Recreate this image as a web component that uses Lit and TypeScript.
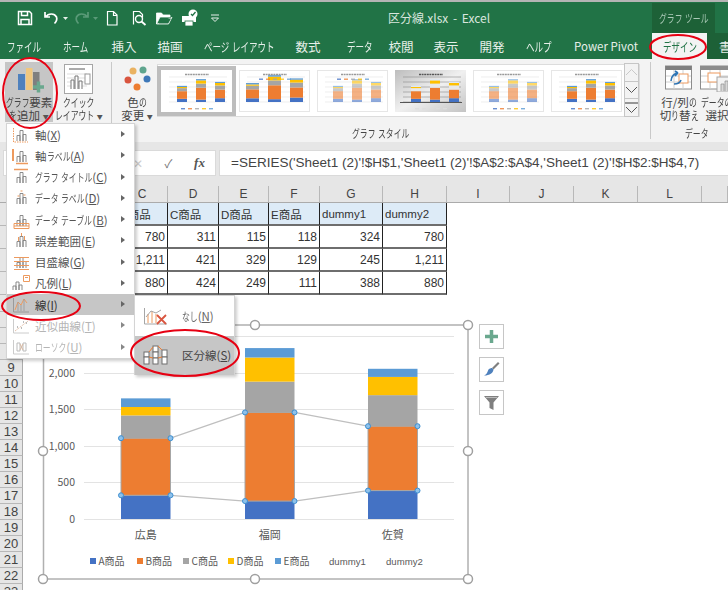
import { LitElement, html, css, svg } from "lit";
import { customElement } from "lit/decorators.js";

const COLORS = ["#4472c4", "#ed7d31", "#a5a5a5", "#ffc000", "#5b9bd5"];
// per region: A, B, C, D, E
const SERIES = [
  { name: "広島", x: 121, vals: [324, 780, 311, 115, 118] },
  { name: "福岡", x: 245, vals: [245, 1211, 421, 329, 129] },
  { name: "佐賀", x: 368, vals: [388, 880, 424, 249, 111] },
];
const TABS: [string, number][] = [
  ["ファイル", 48], ["ホーム", 56], ["挿入", 40], ["描画", 52], ["ページ レイアウト", 86], ["数式", 52],
  ["データ", 52], ["校閲", 30], ["表示", 60], ["開発", 32], ["ヘルプ", 62], ["Power Pivot", 72],
];
const COLS: [string, number][] = [
  ["", 47], ["", 47], ["C", 51], ["D", 51], ["E", 50], ["F", 51], ["G", 63], ["H", 64],
  ["I", 63], ["J", 64], ["K", 64], ["L", 64], ["", 26],
];
const TABLE = [
  ["", "", "B商品", "C商品", "D商品", "E商品", "dummy1", "dummy2"],
  ["", "", "780", "311", "115", "118", "324", "780"],
  ["", "", "1,211", "421", "329", "129", "245", "1,211"],
  ["", "", "880", "424", "249", "111", "388", "880"],
];

// the original UI font has narrow kana, so kana runs get squeezed
const SQUEEZE = 0.68;
function jp(text: string) {
  return text.split(/([ぁ-んァ-ヶー]+)/).map((part, i) =>
    i % 2
      ? html`<span class="kn" style="width:${(part.length * SQUEEZE).toFixed(2)}em"><span>${part}</span></span>`
      : part,
  );
}

const bars = (c = "#7f7f7f") => svg`<path d="M7 15V9.500h3V15M10 15V4.500h3V15M13 15V8.500h3V15" fill="none" stroke=${c} stroke-width=".9"/>`;
const OR = "#ed9a5e";
const MENU = [
  { t: "軸", k: "X", icon: svg`${bars()}<path d="M3.500 2v14H18" fill="none" stroke=${OR} stroke-dasharray="1.500 1"/>` },
  { t: "軸ラベル", k: "A", icon: svg`${bars()}<path d="M3 2v12" stroke=${OR} stroke-width="2"/><path d="M6 16.500h12" stroke=${OR} stroke-width="1.500"/>` },
  { t: "グラフ タイトル", k: "C", icon: svg`${bars()}<path d="M4 1.500h14" stroke=${OR} stroke-width="1.500"/>` },
  { t: "データ ラベル", k: "D", icon: svg`${bars()}<path d="M8.500 6.500v1M11.500 1.500v1M14.500 5.500v1" stroke=${OR} stroke-width="2"/>` },
  { t: "データ テーブル", k: "B", icon: svg`${bars()}<path d="M4 12.500h15v5H4zM4 15h15" fill="none" stroke=${OR}/>` },
  { t: "誤差範囲", k: "E", icon: svg`${bars()}<path d="M8.500 5v4M11.500 1v3M14.500 4v4" stroke=${OR}/>` },
  { t: "目盛線", k: "G", icon: svg`${bars()}<path d="M4 4.500h15M4 8.500h15M4 12.500h15M4 16.500h15" stroke=${OR}/>` },
  { t: "凡例", k: "L", icon: svg`<path d="M3 16v-4h3v4M6 16v-8h3v8M9 16v-5h3v5" fill="none" stroke="#7f7f7f" stroke-width=".9"/><path d="M13.500 1.500h6v6h-6z" fill="none" stroke=${OR}/><path d="M15 3.500h3" stroke=${OR}/>` },
  { t: "線", k: "I", sel: true, icon: svg`<path d="M3.500 2v14H19" fill="none" stroke="#9a9a9a"/><path d="M5 14l3-8 3 3 3-6 3 4" fill="none" stroke=${OR}/><path d="M8 6v9M11 9v6M14 3v12" stroke="#9a9a9a" stroke-width=".8"/>` },
  { t: "近似曲線", k: "T", off: true, icon: svg`<path d="M3.500 2v14H19" fill="none" stroke="#ccc"/><path d="M5 14L18 4" stroke="#e5c3ad" stroke-dasharray="2 1"/><path d="M7 10h1M11 11h1M13 5h1M16 6h1" stroke="#bbb" stroke-width="2"/>` },
  { t: "ローソク", k: "U", off: true, icon: svg`<path d="M3.500 2v14H19" fill="none" stroke="#ccc"/><path d="M7 5h3v8H7zM13 5h3v8h-3z" fill="none" stroke="#bbb"/><path d="M10 6l3 6M13 6l-3 6" stroke="#d8b8a0"/>` },
];

// tiny preview of the same chart for the style gallery
function thumb(v: number) {
  const dark = v === 3;
  const soft = v === 2 || v === 4;
  const x0 = v === 1 ? 7 : 13;
  const gap = v === 1 ? 22 : 19;
  const w = v === 1 ? 13 : 10;
  const k = v === 1 ? 0.0115 : 0.0098;
  const base = 32;
  const rects = SERIES.map((s, i) => {
    let y = base;
    return s.vals.map((val, c) => {
      const h = val * k;
      y -= h;
      const fill = dark && c === 2 ? "#e8e8e8" : dark && c === 4 ? "#dfe8f2" : COLORS[c];
      return svg`<rect x=${x0 + i * gap + (v === 1 ? 0 : 3)} y=${y} width=${w} height=${h} fill=${fill} opacity=${soft ? 0.6 : 1}/>`;
    });
  });
  const gridColor = dark ? "#8a8a8a" : "#e2e2e2";
  const legendY = v === 1 || v === 2 ? 8.500 : 38;
  return html`<svg class="thumb-svg" viewBox="0 0 71 42" width="71" height="42">
    ${dark ? svg`<defs><linearGradient id="tg" x2="1" y2="1"><stop offset="0" stop-color="#bdbdbd"/><stop offset=".5" stop-color="#f0f0f0"/><stop offset="1" stop-color="#c4c4c4"/></linearGradient></defs><rect width="71" height="42" fill="url(#tg)"/>` : ""}
    ${[0, 1, 2, 3, 4, 5].map((i) => svg`<path d=${`M8 ${base - i * 5}H66`} stroke=${gridColor} stroke-width=".6"/>`)}
    ${rects}
    ${dark ? svg`<path d="M5 32.500H67" stroke="#555" stroke-width="1.200"/>` : ""}
    <path d=${`M24 4.500h24`} stroke=${dark ? "#555" : "#999"} stroke-width="1.400" stroke-dasharray="2 .6"/>
    ${[0, 1, 2, 3, 4].map((i) => svg`<rect x=${20 + i * 7} y=${legendY} width="4" height="1.400" fill=${dark ? "#ddd" : COLORS[i]} opacity=".8"/>`)}
  </svg>`;
}

@customElement("app-root")
export class AppRoot extends LitElement {
  static styles = css`
    :host {
      display: block;
      position: relative;
      width: 728px;
      height: 590px;
      overflow: hidden;
      background: #fff;
      color: #444;
      font-family: "Noto Sans CJK JP", "Liberation Sans", sans-serif;
      font-feature-settings: "palt";
      font-size: 11.5px;
    }
    u { text-underline-offset: 1px; }
    .kn { display: inline-block; white-space: nowrap; font-feature-settings: normal; }
    .kn > span { display: inline-block; transform: scaleX(0.68); transform-origin: 0 50%; }

    .topline { height: 2px; background: #b4b4b4; }
    .titlebar {
      height: 31px;
      background: #217346;
      display: flex;
      align-items: center;
      color: #d9e6de;
    }
    .qat { display: flex; align-items: center; padding-left: 16px; box-sizing: border-box; width: 388px; flex: none; }
    .qat svg { display: block; flex: none; }
    .qat .m8 { margin-right: 8px; }
    .qat .m1 { margin-right: 1px; }
    .qat .m2 { margin-right: 2px; }
    .qat .m12 { margin-right: 12px; }
    .qat .m7 { margin-right: 7px; }
    .qat .m9 { margin-right: 9px; }
    .doc-title { font-size: 12px; word-spacing: 2px; flex: 1; }
    .tool-label {
      width: 63px;
      height: 30px;
      margin-right: 13px;
      margin-top: 1px;
      background: #1d6137;
      color: #a9c9b6;
      font-size: 11.5px;
      display: flex;
      align-items: center;
      justify-content: center;
      white-space: nowrap;
    }
    .tabs { display: flex; height: 26px; background: #217346; color: #e6efe9; font-size: 12.5px; }
    .tab { display: flex; align-items: center; justify-content: center; white-space: nowrap; }
    .tab.spacer { width: 10px; }
    .tab.active { width: 55px; background: #f3f3f3; color: #217346; }
    .tab.dark { flex: 1; background: #1d6137; justify-content: flex-start; padding-left: 12px; overflow: hidden; }
    .tab.latin { font-size: 11.5px; }

    .ribbon { display: flex; height: 83px; background: #f3f3f3; }
    .group { display: flex; flex-direction: column; flex: none; }
    .group.g1 { width: 111px; }
    .group.g2 { width: 539px; border-left: 1px solid #c9c9c9; box-sizing: border-box; margin: 3px 0; }
    .group.g3 { width: 78px; box-sizing: border-box; border-left: 1px solid #c9c9c9; margin: 3px 0; }
    .group-body { display: flex; height: 65px; flex: none; }
    .group-label { text-align: center; font-size: 11.5px; height: 13px; line-height: 13px; white-space: nowrap; }
    .g3 .group-label { width: 92px; }
    .rbtn { display: flex; flex-direction: column; align-items: center; line-height: 13px; white-space: nowrap; flex: none; }
    .rbtn .ico { height: 33px; display: flex; align-items: flex-end; justify-content: center; margin-bottom: 1px; }
    .rbtn.add { width: 48px; height: 60px; margin: 3px 0 0 5px; background: #c6c6c6; }
    .rbtn.quick { width: 52px; margin: 3px 0 0 0; }
    .rbtn.color { width: 38px; margin: 0 0 0 6px; }
    .caret { font-size: 6px; vertical-align: 1px; color: #555; }
    .gallery {
      display: flex;
      align-items: center;
      gap: 7px;
      height: 53px;
      margin: 2px 0 0 1px;
      width: 483px;
      flex: none;
      background: #fff;
      border: 1px solid #dcdcdc;
      box-sizing: border-box;
      position: relative;
    }
    .thumb { width: 71px; height: 42px; background: #fff; outline: 1px solid #e6e6e6; outline-offset: -1px; flex: none; }
    .thumb.first { outline: 4px solid #bdbdbd; outline-offset: 0; margin-left: 3px; }
    .thumb-svg { display: block; filter: blur(0.2px); }
    .gallery-arrows { position: absolute; right: 0; top: -1px; width: 15px; height: 53px; display: flex; flex-direction: column; }
    .gallery-arrows div { flex: 1; border: 1px solid #c6c6c6; background: #f3f3f3; display: flex; align-items: center; justify-content: center; margin-top: -1px; }
    .gallery-arrows svg { display: block; }
    .data-btns { display: flex; }
    .data-btns .rbtn { width: 56px; }
    .data-btns .second { margin-left: -18px; }
    .data-btns .ico svg { margin-bottom: 3px; }

    .gutter { height: 8px; background: #e6e6e6; }
    .formula { height: 28px; background: #e6e6e6; display: flex; }
    .fbtns {
      margin-left: 3px;
      width: 213px;
      height: 26px;
      background: #fff;
      border: 1px solid #dadada;
      box-sizing: border-box;
      display: flex;
      align-items: center;
      justify-content: flex-end;
      color: #777;
    }
    .fbtns span { width: 31px; text-align: center; }
    .fbtns .fx { font-family: "Liberation Serif", serif; font-style: italic; font-weight: bold; font-size: 13px; color: #555; }
    .fbtns .x { color: #ccc; }
    .finput {
      margin-left: 3px;
      flex: 1;
      height: 26px;
      background: #fff;
      border: 1px solid #dadada;
      border-right: 0;
      box-sizing: border-box;
      padding-left: 11px;
      font-family: "Liberation Sans", sans-serif;
      font-size: 13.5px;
      line-height: 24px;
      white-space: nowrap;
      overflow: hidden;
      color: #444;
    }

    .colhead { display: flex; height: 25px; background: #e6e6e6; border-bottom: 1px solid #ababab; box-sizing: border-box; }
    .colhead .corner { width: 23px; flex: none; }
    .colhead .c {
      flex: none;
      box-sizing: border-box;
      border-right: 1px solid #b8b8b8;
      margin-top: 8px;
      text-align: center;
      font-family: "Liberation Sans", sans-serif;
      font-size: 12px;
      line-height: 16px;
      color: #444;
    }
    .row { display: flex; box-sizing: border-box; }
    .rowno {
      width: 23px;
      flex: none;
      background: #e6e6e6;
      border-right: 1px solid #ababab;
      border-bottom: 1px solid #b8b8b8;
      box-sizing: border-box;
      text-align: center;
      font-family: "Liberation Sans", sans-serif;
      font-size: 13px;
      line-height: 16px;
      color: #444;
    }
    .cell {
      flex: none;
      box-sizing: border-box;
      font-family: "Liberation Sans", "Noto Sans CJK JP", sans-serif;
      font-size: 12px;
      color: #333;
      display: flex;
      align-items: center;
      white-space: nowrap;
      padding: 0 2px;
    }
    .cell.data { border-right: 1px solid #222; border-bottom: 2px solid #6e6e6e; justify-content: flex-end; }
    .cell.head { background: #ddebf7; justify-content: flex-start; font-size: 11.5px; }
    .cell.first { border-left: 1px solid #222; }

    .chart { position: absolute; left: 37px; top: 319px; display: block; }
    .chart text { font-family: "Noto Sans CJK JP", "Liberation Sans", sans-serif; fill: #595959; font-feature-settings: "palt"; }
    .chart text.latin { font-family: "Liberation Sans", sans-serif; font-size: 9.600px; }
    .side { position: absolute; left: 479px; top: 324px; display: flex; flex-direction: column; gap: 8px; }
    .side div { width: 25px; height: 25px; box-sizing: border-box; border: 1px solid #c6c6c6; background: #fff; display: flex; align-items: center; justify-content: center; }
    .side svg { display: block; }

    .menu {
      position: absolute;
      background: #fff;
      border: 1px solid #d4d4d4;
      box-shadow: 2px 2px 3px rgba(0, 0, 0, 0.2);
      box-sizing: border-box;
    }
    .menu.main { left: 6px; top: 123px; width: 129px; height: 236px; }
    .menu.sub { left: 134px; top: 295px; width: 101px; height: 80px; }
    .item { display: flex; align-items: center; height: 21.27px; position: relative; color: #555; white-space: nowrap; }
    .item .i { width: 21px; height: 18px; margin-left: 3px; margin-right: 4px; flex: none; display: block; }
    .item.sel { background: #c6c6c6; color: #333; }
    .item.off { color: #b5b5b5; }
    .item .arr { position: absolute; right: 9px; top: 7px; width: 0; height: 0; border-left: 4px solid #666; border-top: 3.500px solid transparent; border-bottom: 3.500px solid transparent; }
    .item.off .arr { border-left-color: #888; }
    .subitem { display: flex; align-items: center; height: 40px; color: #666; white-space: nowrap; }
    .subitem svg { margin-left: 8px; margin-right: 14px; flex: none; display: block; }
    .subitem.sel { background: #c6c6c6; color: #444; height: 39px; padding-bottom: 2px; box-sizing: border-box; }

    .marks { position: absolute; left: 0; top: 0; pointer-events: none; display: block; }
  `;

  private qat() {
    const w = "#fff";
    return html`
      <svg class="m8" width="18" height="18" viewBox="0 0 18 18"><path d="M2.500 2.500h11l2 2v11h-13z M5.500 2.500v4h6v-4M5 15.500v-5h8v5" fill="none" stroke=${w} stroke-width="1.500"/></svg>
      <svg width="18" height="18" viewBox="0 0 18 18"><path d="M3 3v5h5M3.500 8c3-4 9-4 11 0 1 3-.5 5-2 6.500" fill="none" stroke=${w} stroke-width="1.700"/></svg>
      <svg class="m1" width="12" height="18" viewBox="0 0 12 18"><path d="M3 8h5l-2.500 3z" fill="#e6efe9"/></svg>
      <svg width="18" height="18" viewBox="0 0 18 18"><path d="M15 3v5h-5M14.500 8c-3-4-9-4-11 0-1 3 .5 5 2 6.500" fill="none" stroke="#5a9a78" stroke-width="1.700"/></svg>
      <svg class="m2" width="12" height="18" viewBox="0 0 12 18"><path d="M2 8h5l-2.500 3z" fill="#5a9a78"/></svg>
      <svg class="m12" width="14" height="18" viewBox="0 0 14 18"><path d="M2.500 2.500h6l3.500 3.500v10h-9.500zM8.500 2.500v4h3.500" fill="none" stroke=${w} stroke-width="1.200"/></svg>
      <svg class="m7" width="17" height="18" viewBox="0 0 17 18"><path d="M2.500 15.500v-13h6l3 3v3" fill="none" stroke=${w} stroke-width="1.200"/><circle cx="8" cy="10" r="3.500" fill="none" stroke=${w} stroke-width="1.400"/><path d="M10.500 12.500l4 3.500" stroke=${w} stroke-width="1.800"/></svg>
      <svg class="m7" width="19" height="18" viewBox="0 0 19 18"><path d="M1.500 15V4h5l1.500 2h7v2H5l-3.500 7h12l3.500-7" fill=${w} stroke=${w} stroke-width=".8"/><path d="M6 9.500h10l-2.800 5H3.500z" fill="#217346"/></svg>
      <svg class="m9" width="19" height="18" viewBox="0 0 19 18"><rect x="1" y="7" width="14" height="6" fill=${w}/><rect x="4" y="12" width="8" height="5" fill=${w} stroke="#217346" stroke-width=".8"/><circle cx="12" cy="5" r="4.500" fill=${w}/><path d="M10 5l1.500 1.500L14.500 3" fill="none" stroke="#217346" stroke-width="1.300"/></svg>
      <svg width="12" height="18" viewBox="0 0 12 18"><path d="M2 6h8M2.500 9h7l-3.500 3.500z" fill="none" stroke="#e6efe9"/></svg>`;
  }

  private ribbon() {
    return html`<div class="ribbon">
      <div class="group g1">
        <div class="group-body">
          <div class="rbtn add">
            <div class="ico">
              <svg width="34" height="33" viewBox="0 0 34 33"><rect x="6" y="12" width="7" height="16" fill="#4f81bd"/><rect x="14" y="6" width="6.500" height="22" fill="#f0c77e"/><rect x="21" y="10" width="6.500" height="18" fill="#7f7f7f"/><path d="M21 25h11M26.500 19.500v11" stroke="#6aa88e" stroke-width="3.500"/></svg>
            </div>
            <span>${jp("グラフ要素")}</span>
            <span>${jp("を追加")} <span class="caret">▼</span></span>
          </div>
          <div class="rbtn quick">
            <div class="ico">
              <svg width="30" height="32" viewBox="0 0 30 32"><rect x=".5" y="1.500" width="28" height="29" fill="#fff" stroke="#a6a6a6"/><path d="M5 6h16" stroke="#8f8f8f" stroke-width="1.500"/><path d="M3 11h20M3 15h20M3 19h20M3 23h20" stroke="#ddd"/><path d="M7 26v-9h3v9M11 26v-13h3v13M15 26v-8h3v8" fill="#fff" stroke="#777"/><rect x="21" y="11" width="5" height="10" fill="#fff" stroke="#999"/></svg>
            </div>
            <span>${jp("クイック")}</span>
            <span>${jp("レイアウト")} <span class="caret">▼</span></span>
          </div>
        </div>
      </div>
      <div class="group g2">
        <div class="group-body">
          <div class="rbtn color">
            <div class="ico">
              <svg width="28" height="30" viewBox="0 0 28 30"><circle cx="10" cy="6" r="3.500" fill="#eab261"/><circle cx="20" cy="5" r="3.500" fill="#5fa58e"/><circle cx="5" cy="15" r="3.500" fill="#d9553f"/><circle cx="24" cy="14" r="3.500" fill="#3f78b8"/><circle cx="14" cy="22" r="3.500" fill="#ed7d31"/></svg>
            </div>
            <span>${jp("色の")}</span>
            <span>変更 <span class="caret">▼</span></span>
          </div>
          <div class="gallery">
            ${[0, 1, 2, 3, 4, 5].map((v) => html`<div class="thumb ${v === 0 ? "first" : ""}">${thumb(v)}</div>`)}
            <div class="gallery-arrows">
              <div><svg width="13" height="8" viewBox="0 0 13 8"><path d="M1 7l5.500-5.500L12 7" fill="none" stroke="#c9c9c9"/></svg></div>
              <div><svg width="13" height="8" viewBox="0 0 13 8"><path d="M1 1l5.500 5.500L12 1" fill="none" stroke="#555"/></svg></div>
              <div><svg width="13" height="12" viewBox="0 0 13 12"><path d="M0 1h13" stroke="#777" stroke-width="1.500"/><path d="M1 5l5.500 5.500L12 5" fill="none" stroke="#555"/></svg></div>
            </div>
          </div>
        </div>
        <div class="group-label">${jp("グラフ スタイル")}</div>
      </div>
      <div class="group g3">
        <div class="group-body">
          <div class="data-btns">
            <div class="rbtn">
              <div class="ico">
                <svg width="28" height="27" viewBox="0 0 28 27"><rect x=".5" y="1" width="26" height="23" fill="#fff" stroke="#8c8c8c"/><rect x=".5" y="1" width="26" height="4" fill="#7f7f7f"/><path d="M9 5v19M18 5v19M1 11h25M1 17h25" stroke="#d0d0d0"/><rect x="14" y="9" width="9" height="9" fill="#fff" stroke="#ed9a5e"/><path d="M6 16c0-5 4-8 7-8M13 8l-3-2M13 8l-3 3" fill="none" stroke="#2f75b5" stroke-width="1.600"/><path d="M16 15c-1 3-4 4-7 4" fill="none" stroke="#2f75b5" stroke-width="1.600"/></svg>
              </div>
              <span>${jp("行/列の")}</span>
              <span>${jp("切り替え")}</span>
            </div>
            <div class="rbtn second">
              <div class="ico">
                <svg width="34" height="27" viewBox="0 0 34 27"><rect x=".5" y="1" width="32" height="23" fill="#fff" stroke="#8c8c8c"/><rect x=".5" y="1" width="32" height="4" fill="#8c8c8c"/><path d="M10 5v19M20 5v19M1 11h32M1 17h32" stroke="#d0d0d0"/><rect x="8" y="8" width="12" height="9" fill="#fff" stroke="#ed9a5e"/><rect x="17" y="12" width="17" height="15" fill="#f3f3f3" stroke="#a6a6a6"/><path d="M21 26v-7h3v7M25 26v-10h3v10M29 26v-6h3v6" fill="#d9d9d9" stroke="#8c8c8c" stroke-width=".7"/></svg>
              </div>
              <span>${jp("データの")}</span>
              <span>選択</span>
            </div>
          </div>
        </div>
        <div class="group-label">${jp("データ")}</div>
      </div>
    </div>`;
  }

  private sheet() {
    const rows = [];
    // rows 1-4 hold the table; row numbers up to 8 lie under the open menu
    for (let r = 0; r < 4; r++) {
      rows.push(html`<div class="row" style="height:23px">
        <div class="rowno"></div>
        ${TABLE[r].map((v, c) => {
          const cls = r === 0 ? "data head" : "data";
          return html`<div class="cell ${cls} ${c === 2 ? "first" : ""}" style="width:${COLS[c][1]}px">${v}</div>`;
        })}
      </div>`);
    }
    for (let r = 5; r <= 23; r++) {
      rows.push(html`<div class="row" style="height:${r === 5 ? 17 : 16}px"><div class="rowno">${r > 8 ? r : ""}</div></div>`);
    }
    return html`<div class="colhead">
        <div class="corner"></div>
        ${COLS.map(([n, w]) => html`<div class="c" style="width:${w}px">${n}</div>`)}
      </div>
      ${rows}`;
  }

  private chart() {
    const zero = 519;
    const k = 0.0732;
    const bw = 49.5;
    const tops = SERIES.map((s) => {
      const a = zero - s.vals[0] * k;
      const b = a - s.vals[1] * k;
      return { x: s.x, a, b };
    });
    const lines = [];
    for (let i = 0; i < 2; i++) {
      const p = tops[i];
      const q = tops[i + 1];
      lines.push(svg`<path d=${`M${p.x + bw} ${p.a}L${q.x} ${q.a}M${p.x + bw} ${p.b}L${q.x} ${q.b}`} stroke="#bfbfbf" stroke-width="1.200" fill="none"/>`);
    }
    const handles = [
      [43, 325], [255, 325], [468, 325], [43, 451], [468, 451], [43, 579], [255, 579], [468, 579],
    ];
    const legend: [string, number, string][] = [
      ["A商品", 90, COLORS[0]], ["B商品", 137, COLORS[1]], ["C商品", 183, COLORS[2]], ["D商品", 228, COLORS[3]], ["E商品", 275, COLORS[4]],
    ];
    return html`<svg class="chart" width="437" height="266" viewBox="37 319 437 266">
      <rect x="43.500" y="325" width="424.500" height="254" fill="#fff" stroke="#b0b0b0" stroke-width="1.500"/>
      ${[0, 500, 1000, 1500, 2000, 2500].map((v) => {
        const y = Math.round(zero - v * k) + 0.5;
        return svg`<path d=${`M84 ${y}H454`} stroke="#e3e3e3" stroke-width="1.200"/>
          ${v < 2500 ? svg`<text x="75" y=${y + 3.500} text-anchor="end" font-size="10.500">${v.toLocaleString("en-US")}</text>` : ""}`;
      })}
      ${SERIES.map((s) => {
        let y = zero;
        return html`${s.vals.map((v, c) => {
          const h = v * k;
          y -= h;
          return svg`<rect x=${s.x} y=${y} width=${bw} height=${h} fill=${COLORS[c]}/>`;
        })}
        ${svg`<text x=${s.x + bw / 2} y="539" text-anchor="middle" font-size="11">${s.name}</text>`}`;
      })}
      ${tops.map((t) => svg`<path d=${`M${t.x} ${t.a}V${t.b}H${t.x + bw}V${t.a}z`} fill="none" stroke="#a6a6a6" stroke-width="1"/>`)}
      ${lines}
      ${tops.map((t) => [[t.x, t.a], [t.x + bw, t.a], [t.x, t.b], [t.x + bw, t.b]].map(
        ([x, y]) => svg`<circle cx=${x} cy=${y} r="2.500" fill="#8fc1ea" stroke="#3d8fd1"/>`,
      ))}
      ${legend.map(([n, x, c]) => svg`<rect x=${x} y="558" width="6" height="6" fill=${c}/><text x=${x + 8.500} y="565" font-size="10">${n}</text>`)}
      <text class="latin" x="329" y="564.500">dummy1</text>
      <text class="latin" x="386" y="564.500">dummy2</text>
      ${handles.map(([x, y]) => svg`<circle cx=${x} cy=${y} r="4.500" fill="#fff" stroke="#a0a0a0" stroke-width="1.500"/>`)}
    </svg>`;
  }

  private menu() {
    return html`<div class="menu main">
        ${MENU.map((m) => html`<div class="item ${m.sel ? "sel" : ""} ${m.off ? "off" : ""}">
          <svg class="i" viewBox="0 0 21 18">${m.icon}</svg>
          <span>${jp(m.t)}(<u>${m.k}</u>)</span>
          <span class="arr"></span>
        </div>`)}
      </div>
      <div class="menu sub">
        <div class="subitem">
          <svg width="25" height="20" viewBox="0 0 25 20"><path d="M1.500 2v16H24" fill="none" stroke="#a6a6a6"/><path d="M5 17V8M9 17V5M13 17V8" stroke="#ed9a5e"/><path d="M3 11l5-6 5 2 5-3" fill="none" stroke="#a6a6a6"/><path d="M14 9l9 9M23 9l-9 9" stroke="#d9553f" stroke-width="1.800"/></svg>
          <span>${jp("なし")}(<u>N</u>)</span>
        </div>
        <div class="subitem sel">
          <svg width="25" height="20" viewBox="0 0 25 20"><g fill="#fff" stroke="#6e6e6e"><rect x="1" y="7" width="5" height="5"/><rect x="1" y="12" width="5" height="7"/><rect x="10" y="1" width="5" height="6"/><rect x="10" y="7" width="5" height="6"/><rect x="10" y="13" width="5" height="6"/><rect x="19" y="5" width="5" height="7"/><rect x="19" y="12" width="5" height="7"/></g><path d="M6 7l4-5M6 12l4 1M15 1l4 4M15 13l4-1" stroke="#ed7d31" fill="none"/></svg>
          <span>区分線(<u>S</u>)</span>
        </div>
      </div>`;
  }

  render() {
    return html`
      <div class="topline"></div>
      <div class="titlebar">
        <div class="qat">${this.qat()}</div>
        <div class="doc-title">区分線.xlsx - Excel</div>
        <div class="tool-label"><span>${jp("グラフ ツール")}</span></div>
      </div>
      <div class="tabs">
        ${TABS.map(([t, w]) => html`<div class="tab ${t === "Power Pivot" ? "latin" : ""}" style="width:${w}px"><span>${jp(t)}</span></div>`)}
        <div class="tab spacer"></div>
        <div class="tab active"><span>${jp("デザイン")}</span></div>
        <div class="tab dark">書</div>
      </div>
      ${this.ribbon()}
      <div class="gutter"></div>
      <div class="formula">
        <div class="fbtns"><span class="x">✕</span><span>✓</span><span class="fx">fx</span></div>
        <div class="finput">=SERIES('Sheet1 (2)'!$H$1,'Sheet1 (2)'!$A$2:$A$4,'Sheet1 (2)'!$H$2:$H$4,7)</div>
      </div>
      ${this.sheet()}
      ${this.chart()}
      <div class="side">
        <div><svg width="15" height="15" viewBox="0 0 15 15"><path d="M7.500 1v13M1 7.500h13" stroke="#6aa88e" stroke-width="3.500"/></svg></div>
        <div><svg width="19" height="19" viewBox="0 0 19 19"><path d="M10 8l6-6 1.500 1.500-6 6z" fill="#7f7f7f"/><path d="M10 8l1.500 1.500C11 13 8 15.500 2 15.500c3-1 3.500-4 4.500-6 1-1 2.500-1.500 3.500-1.500z" fill="#4f81bd"/></svg></div>
        <div><svg width="19" height="19" viewBox="0 0 19 19"><path d="M2 3h15l-5.500 6.500V17l-4-2V9.500z" fill="#7f7f7f"/><path d="M4 4.500h11" stroke="#bbb"/></svg></div>
      </div>
      ${this.menu()}
      <svg class="marks" width="728" height="590" viewBox="0 0 728 590" fill="none" stroke="#e60012" stroke-width="2">
        <ellipse cx="30" cy="93" rx="27" ry="35"/>
        <ellipse cx="41" cy="306" rx="39" ry="14"/>
        <ellipse cx="185" cy="353" rx="54" ry="23"/>
        <ellipse cx="678" cy="47" rx="28" ry="12"/>
      </svg>
    `;
  }
}
